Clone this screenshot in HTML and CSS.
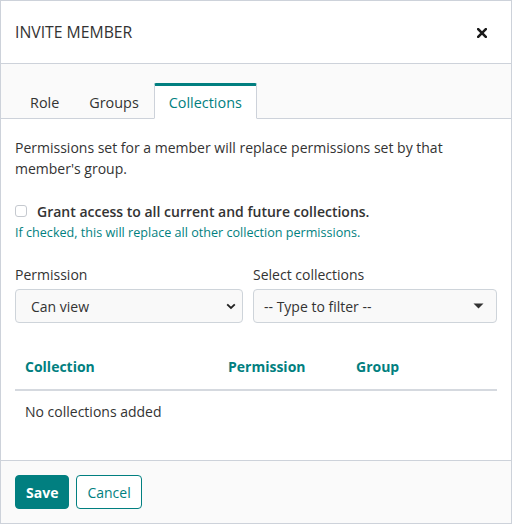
FILE: index.html
```html
<!DOCTYPE html>
<html lang="en">
<head>
<meta charset="utf-8">
<title>Invite member</title>
<link rel="stylesheet" href="styles.css">
</head>
<body>
<div class="modal">
  <div class="modal-header">
    <h1 class="modal-title">INVITE MEMBER</h1>
    <button class="close" aria-label="Close">
      <svg width="10" height="10" viewBox="0 0 10 10"><path d="M1.2 1.2 L8.8 8.8 M8.8 1.2 L1.2 8.8" stroke="#1a1a1a" stroke-width="2.6" stroke-linecap="square" fill="none"/></svg>
    </button>
  </div>
  <div class="tabs">
    <a class="tab">Role</a>
    <a class="tab">Groups</a>
    <a class="tab active">Collections</a>
  </div>
  <div class="modal-body">
    <p class="intro">Permissions set for a member will replace permissions set by that member's group.</p>
    <label class="check-row"><span class="checkbox"></span><span class="check-label">Grant access to all current and future collections.</span></label>
    <div class="help">If checked, this will replace all other collection permissions.</div>
    <div class="fields">
      <div class="field">
        <div class="field-label">Permission</div>
        <div class="select">
          <span>Can view</span>
          <svg width="10" height="7" viewBox="0 0 10 7"><path d="M1.2 1.3 L5 5 L8.8 1.3" stroke="#222" stroke-width="1.8" fill="none"/></svg>
        </div>
      </div>
      <div class="field">
        <div class="field-label">Select collections</div>
        <div class="select filter">
          <span>-- Type to filter --</span>
          <svg width="11" height="6" viewBox="0 0 11 6"><path d="M0.5 0.5 H10.5 L5.5 5.5 Z" fill="#333"/></svg>
        </div>
      </div>
    </div>
    <div class="table">
      <div class="thead">
        <div class="th c1">Collection</div>
        <div class="th c2">Permission</div>
        <div class="th c3">Group</div>
      </div>
      <div class="empty">No collections added</div>
    </div>
  </div>
  <div class="modal-footer">
    <button class="btn primary">Save</button>
    <button class="btn outline">Cancel</button>
  </div>
</div>
</body>
</html>
```

FILE: styles.css
```css
* { box-sizing: border-box; }
html, body { margin: 0; padding: 0; background: #fff; }
body {
  font-family: "Open Sans", "Liberation Sans", sans-serif;
  color: #333;
  font-size: 14px;
}
.modal {
  width: 512px;
  height: 524px;
  border: 1px solid #cdd2da;
  display: flex;
  flex-direction: column;
}
.modal-header {
  height: 63px;
  border-bottom: 1px solid #cdd2da;
  display: flex;
  align-items: center;
  justify-content: space-between;
  padding: 0 24px 0 14px;
}
.modal-title {
  margin: 0;
  font-size: 15.75px;
  font-weight: 400;
  color: #333;
}
.close {
  border: 0;
  background: none;
  padding: 0;
  display: flex;
  margin-top: 2px;
}
.tabs {
  background: #fafafa;
  border-bottom: 1px solid #cdd2da;
  display: flex;
  padding: 19px 14px 0;
}
.tab {
  display: block;
  font-size: 14.4px;
  line-height: 20px;
  padding: 7px 14px 5px;
  border: 1px solid transparent;
  border-top-width: 3px;
  margin-bottom: -1px;
  color: #333;
}
.tab.active {
  background: #fff;
  color: #017f80;
  border-color: #cdd2da;
  border-top-color: #017f80;
  border-bottom-color: #fff;
  border-radius: 2px 2px 0 0;
}
.modal-body {
  flex: 1;
  padding: 18px 14px 0;
}
.intro {
  margin: 0;
  line-height: 21px;
}
.check-row {
  display: flex;
  align-items: center;
  margin-top: 21px;
  height: 22px;
}
.checkbox {
  width: 12px;
  height: 12px;
  border: 1px solid #c5c9cf;
  border-radius: 3px;
  background: #fff;
  margin-right: 10px;
}
.check-label {
  font-size: 14px;
  font-weight: 600;
  color: #333;
}
.help {
  font-size: 12.6px;
  line-height: 21px;
  color: #017f80;
}
.fields {
  display: grid;
  grid-template-columns: 228px 1fr;
  gap: 10px;
  margin-top: 21px;
}
.field-label {
  line-height: 21px;
  margin-bottom: 4px;
}
.select {
  height: 34px;
  border: 1px solid #ced4da;
  border-radius: 4px;
  background: #f9f9f9;
  display: flex;
  align-items: center;
  justify-content: space-between;
  padding: 0 6px 0 15px;
}
.select.filter {
  background: #f9f9f9;
  padding: 0 12px 0 10px;
}
.table {
  margin-top: 28px;
}
.thead {
  display: flex;
  border-bottom: 2px solid #d5d9df;
  padding: 5px 0 12px;
  line-height: 21px;
  font-weight: 700;
  color: #017f80;
}
.th { padding: 0 10px; }
.c1 { width: 203px; }
.c2 { width: 128px; }
.empty {
  padding: 10px 10px;
  line-height: 21px;
}
.modal-footer {
  height: 63px;
  border-top: 1px solid #cdd2da;
  background: #fafafa;
  display: flex;
  align-items: center;
  padding: 0 14px 0;
  gap: 7px;
}
.btn {
  font-family: inherit;
  font-size: 14px;
  height: 34px;
  border-radius: 4px;
  padding: 0 10px;
  cursor: pointer;
}
.primary {
  background: #017f80;
  border: 1px solid #017f80;
  color: #fff;
  font-weight: 700;
}
.outline {
  background: #fff;
  border: 1px solid #017f80;
  color: #017f80;
  font-weight: 400;
}
```
